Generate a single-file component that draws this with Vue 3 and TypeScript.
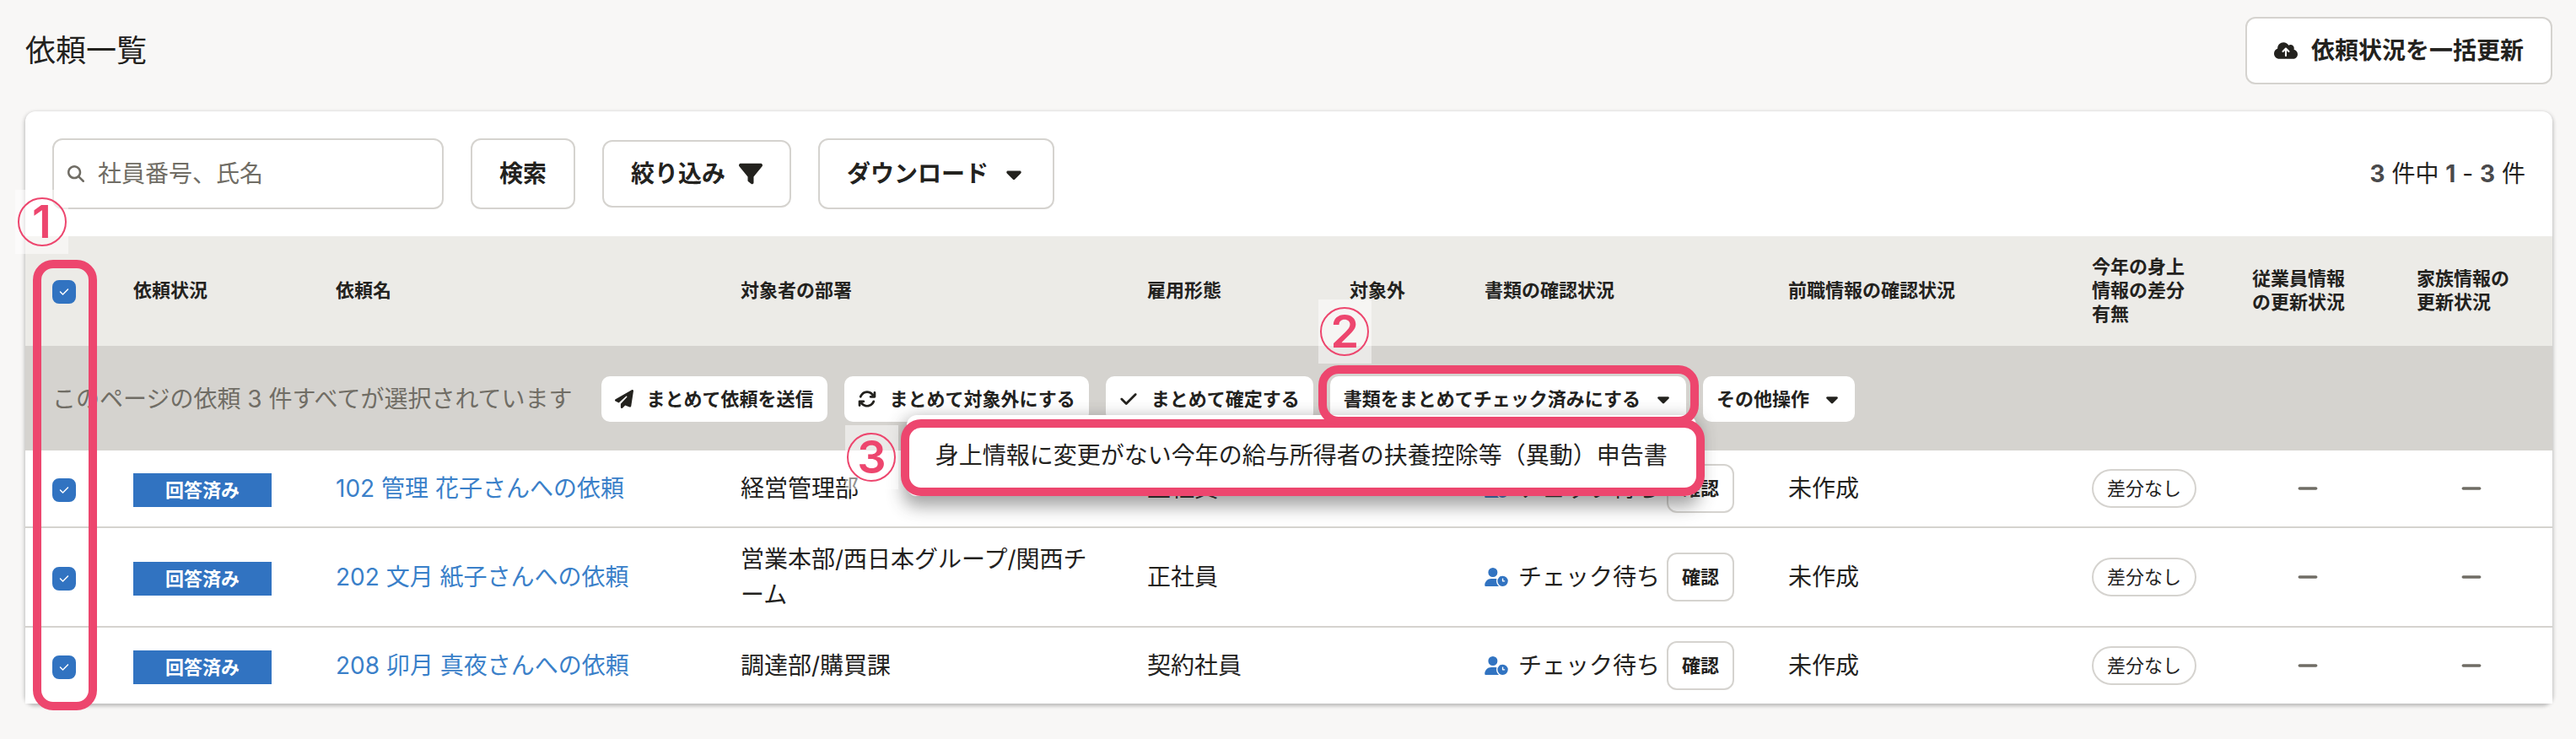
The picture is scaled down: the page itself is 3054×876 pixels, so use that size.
<script setup lang="ts">
import { h, reactive, computed, type FunctionalComponent } from 'vue'

type IconName = 'cloud' | 'search' | 'filter' | 'caret' | 'plane' | 'rotate' | 'check' | 'userClock' | 'minus'

const icons: Record<IconName, [number, string]> = {
  cloud: [640, 'M144 480C64.5 480 0 415.5 0 336c0-62.8 40.2-116.2 96.2-135.9c-.1-2.7-.2-5.4-.2-8.1c0-88.4 71.6-160 160-160c59.3 0 111 32.2 138.7 80.2C409.9 102 428.3 96 448 96c53 0 96 43 96 96c0 12.2-2.3 23.8-6.4 34.6C596 238.4 640 290.1 640 352c0 70.7-57.3 128-128 128H144zm79-217c-9.4 9.4-9.4 24.6 0 33.9s24.6 9.4 33.9 0l39-39V392c0 13.3 10.7 24 24 24s24-10.7 24-24V257.9l39 39c9.4 9.4 24.6 9.4 33.9 0s9.4-24.6 0-33.9l-80-80c-9.4-9.4-24.6-9.4-33.9 0l-80 80z'],
  search: [512, 'M416 208c0 45.9-14.9 88.3-40 122.7L502.6 457.4c12.5 12.5 12.5 32.8 0 45.3s-32.8 12.5-45.3 0L330.7 376c-34.4 25.2-76.8 40-122.7 40C93.1 416 0 322.9 0 208S93.1 0 208 0S416 93.1 416 208zM208 352a144 144 0 1 0 0-288 144 144 0 1 0 0 288z'],
  filter: [512, 'M3.9 54.9C10.5 40.9 24.5 32 40 32H472c15.5 0 29.5 8.9 36.1 22.9s4.6 30.5-5.2 42.5L320 320.9V448c0 12.1-6.8 23.2-17.7 28.6s-23.8 4.3-33.5-3l-64-48c-8.1-6-12.8-15.5-12.8-25.6V320.9L9 97.3C-.7 85.4-2.8 68.8 3.9 54.9z'],
  caret: [320, 'M137.4 374.6c12.5 12.5 32.8 12.5 45.3 0l128-128c9.2-9.2 11.9-22.9 6.9-34.9s-16.6-19.8-29.6-19.8L32 192c-12.9 0-24.6 7.8-29.6 19.8s-2.2 25.7 6.9 34.9l128 128z'],
  plane: [512, 'M498.1 5.6c10.1 7 15.4 19.1 13.5 31.2l-64 416c-1.5 9.7-7.4 18.2-16 23s-18.9 5.4-28 1.6L284 427.7l-68.5 74.1c-8.9 9.7-22.9 12.9-35.2 8.1S160 493.2 160 480V396.4c0-4 1.5-7.8 4.2-10.7L331.8 202.8c5.8-6.3 5.6-16-.4-22s-15.7-6.4-22-.7L106 360.8 17.7 316.6C7.1 311.3 .3 300.7 0 288.9s5.9-22.8 16.1-28.7l448-256c10.7-6.1 23.9-5.5 34 1.4z'],
  rotate: [512, 'M105.1 202.6c7.7-21.8 20.2-42.3 37.8-59.8c62.5-62.5 163.8-62.5 226.3 0L386.3 160H352c-17.7 0-32 14.3-32 32s14.3 32 32 32H463.5h.4c17.7 0 32-14.3 32-32V80c0-17.7-14.3-32-32-32s-32 14.3-32 32v35.2L414.4 97.6c-87.5-87.5-229.3-87.5-316.8 0C73.2 122 55.6 150.7 44.8 181.4c-5.9 16.7 2.9 34.9 19.5 40.8s34.9-2.9 40.8-19.5zM39 289.3c-5 1.5-9.8 4.2-13.7 8.2c-4 4-6.7 8.8-8.1 14c-.3 1.2-.6 2.5-.8 3.8c-.3 1.7-.4 3.4-.4 5.1V432c0 17.7 14.3 32 32 32s32-14.3 32-32V396.9l17.6 17.5c87.5 87.4 229.3 87.4 316.7 0c24.4-24.4 42.1-53.1 52.9-83.7c5.9-16.7-2.9-34.9-19.5-40.8s-34.9 2.9-40.8 19.5c-7.7 21.8-20.2 42.3-37.8 59.8c-62.5 62.5-163.8 62.5-226.3 0l-.1-.1L125.6 352H160c17.7 0 32-14.3 32-32s-14.3-32-32-32H48.4c-1.6 0-3.2 .1-4.8 .3s-3.1 .5-4.6 1z'],
  check: [448, 'M438.6 105.4c12.5 12.5 12.5 32.8 0 45.3l-256 256c-12.5 12.5-32.8 12.5-45.3 0l-128-128c-12.5-12.5-12.5-32.8 0-45.3s32.8-12.5 45.3 0L160 338.7 393.4 105.4c12.5-12.5 32.8-12.5 45.3 0z'],
  userClock: [640, 'M224 256A128 128 0 1 0 224 0a128 128 0 1 0 0 256zM178.3 304C79.8 304 0 383.8 0 482.3C0 498.7 13.3 512 29.7 512H392C350 480 322 430 321 368c0-20 3-40 9-58c-18-4-38-6-60-6H178.3zM640 368a144 144 0 1 0-288 0 144 144 0 1 0 288 0zM496 288c8.8 0 16 7.2 16 16v48h32c8.8 0 16 7.2 16 16s-7.2 16-16 16H496c-8.8 0-16-7.2-16-16V304c0-8.8 7.2-16 16-16z'],
  minus: [448, 'M432 256c0 17.7-14.3 32-32 32L48 288c-17.7 0-32-14.3-32-32s14.3-32 32-32l352 0c17.7 0 32 14.3 32 32z'],
}

const Icon: FunctionalComponent<{ name: IconName }> = (props) => {
  const [width, d] = icons[props.name]
  return h('svg', { viewBox: `0 0 ${width} 512`, 'aria-hidden': 'true' }, [
    h('path', { d, fill: 'currentColor', 'fill-rule': 'evenodd' }),
  ])
}
Icon.props = ['name']

interface RequestRow {
  id: number
  name: string
  department: string
  employment: string
  checked: boolean
}

const rows = reactive<RequestRow[]>([
  { id: 102, name: '102 管理 花子さんへの依頼', department: '経営管理部', employment: '正社員', checked: true },
  { id: 202, name: '202 文月 紙子さんへの依頼', department: '営業本部/西日本グループ/関西チーム', employment: '正社員', checked: true },
  { id: 208, name: '208 卯月 真夜さんへの依頼', department: '調達部/購買課', employment: '契約社員', checked: true },
])

const headings = [
  '依頼状況', '依頼名', '対象者の部署', '雇用形態', '対象外', '書類の確認状況',
  '前職情報の確認状況', '今年の身上情報の差分有無', '従業員情報の更新状況', '家族情報の更新状況',
]

const allChecked = computed({
  get: () => rows.every((row) => row.checked),
  set: (value: boolean) => rows.forEach((row) => { row.checked = value }),
})
</script>

<template>
  <main class="page">
    <header class="page-head">
      <h1>依頼一覧</h1>
      <button type="button" class="btn btn-short"><Icon name="cloud" class="icon" />依頼状況を一括更新</button>
    </header>

    <section class="panel">
      <div class="toolbar">
        <label class="search">
          <Icon name="search" class="search-icon" />
          <input type="text" placeholder="社員番号、氏名" aria-label="社員番号、氏名" />
        </label>
        <button type="button" class="btn">検索</button>
        <button type="button" class="btn btn-short">絞り込み<Icon name="filter" class="icon" /></button>
        <button type="button" class="btn">ダウンロード<Icon name="caret" class="icon" /></button>
        <p class="count"><b>3</b> 件中 <b>1</b> - <b>3</b> 件</p>
      </div>

      <table>
        <colgroup>
          <col class="c-check" /><col class="c-mid" /><col class="c-name" /><col /><col class="c-mid" />
          <col class="c-out" /><col class="c-wide" /><col class="c-wide" /><col class="c-diff" /><col class="c-emp" /><col class="c-fam" />
        </colgroup>
        <thead>
          <tr>
            <th scope="col">
              <span class="tick">
                <input v-model="allChecked" type="checkbox" aria-label="すべて選択" />
                <Icon name="check" />
              </span>
            </th>
            <th v-for="heading in headings" :key="heading" scope="col">{{ heading }}</th>
          </tr>
        </thead>
        <tbody>
          <tr class="bulk-row">
            <td colspan="11">
              <div class="bulk">
                <p>このページの依頼 3 件すべてが選択されています</p>
                <button type="button" class="btn-s"><Icon name="plane" class="icon" />まとめて依頼を送信</button>
                <button type="button" class="btn-s"><Icon name="rotate" class="icon" />まとめて対象外にする</button>
                <button type="button" class="btn-s"><Icon name="check" class="icon" />まとめて確定する</button>
                <div class="dropdown">
                  <button type="button" class="btn-s" aria-expanded="true">書類をまとめてチェック済みにする<Icon name="caret" class="icon" /></button>
                  <div class="menu">
                    <button type="button" class="menu-item">身上情報に変更がない今年の給与所得者の扶養控除等（異動）申告書</button>
                    <span class="ring ring-menu"></span>
                    <span class="step step-menu"><i>3</i></span>
                  </div>
                  <span class="ring ring-button"></span>
                  <span class="step step-button"><i>2</i></span>
                </div>
                <button type="button" class="btn-s">その他操作<Icon name="caret" class="icon" /></button>
              </div>
            </td>
          </tr>
          <tr v-for="row in rows" :key="row.id" class="item">
            <td>
              <span class="tick">
                <input v-model="row.checked" type="checkbox" :aria-label="row.name" />
                <Icon name="check" />
              </span>
            </td>
            <td><span class="status">回答済み</span></td>
            <td><a href="#">{{ row.name }}</a></td>
            <td>{{ row.department }}</td>
            <td>{{ row.employment }}</td>
            <td></td>
            <td>
              <div class="review">
                <Icon name="userClock" class="waiting" />
                <span>チェック待ち</span>
                <button type="button" class="btn-confirm">確認</button>
              </div>
            </td>
            <td>未作成</td>
            <td><span class="chip">差分なし</span></td>
            <td><Icon name="minus" class="dash" /></td>
            <td><Icon name="minus" class="dash" /></td>
          </tr>
        </tbody>
      </table>

      <span class="ring ring-checks"></span>
      <span class="step step-checks"><i>1</i></span>
    </section>
  </main>
</template>

<style>
body {
  background: #f8f7f6;
}
</style>

<style scoped>
* {
  box-sizing: border-box;
}

.page {
  padding: 20px 28px 40px 30px;
  color: #23221e;
  font: 28px/42px Inter, "Noto Sans CJK JP", sans-serif;
}

h1,
p {
  margin: 0;
}

button,
input {
  font: inherit;
  color: inherit;
}

button {
  margin: 0;
  cursor: pointer;
}

svg {
  display: block;
  flex: none;
}

.page-head {
  display: flex;
  align-items: center;
  justify-content: space-between;
  margin-bottom: 32px;
}

h1 {
  font-size: 36px;
  font-weight: 400;
}

.btn {
  display: flex;
  align-items: center;
  gap: 16px;
  height: 84px;
  padding: 0 32px;
  border: 2px solid #d5d3cf;
  border-radius: 12px;
  background: #fff;
  font-weight: 700;
  white-space: nowrap;
}

.btn-short {
  height: 80px;
}

.btn .icon {
  width: 28px;
  height: 28px;
}

.panel {
  position: relative;
  border-radius: 12px;
  background: #fff;
  box-shadow: 0 2px 4px 1px rgba(51, 51, 51, 0.3);
}

.toolbar {
  display: flex;
  align-items: center;
  gap: 32px;
  padding: 32px;
}

.search {
  display: flex;
  align-items: center;
  gap: 16px;
  width: 464px;
  height: 84px;
  padding: 0 16px;
  border: 2px solid #d5d3cf;
  border-radius: 12px;
}

.search-icon {
  width: 20px;
  height: 20px;
  color: #706d65;
}

.search input {
  flex: 1;
  min-width: 0;
  padding: 0;
  border: 0;
  outline: 0;
  background: none;
}

.search input::placeholder {
  color: #706d65;
  opacity: 1;
}

.count {
  margin-left: auto;
}

.count b {
  color: #4a4a4c;
}

table {
  width: 100%;
  border-collapse: separate;
  border-spacing: 0;
  table-layout: fixed;
}

.c-check { width: 96px; }
.c-mid { width: 240px; }
.c-name { width: 480px; }
.c-out { width: 160px; }
.c-wide { width: 360px; }
.c-diff { width: 190px; }
.c-emp { width: 195px; }
.c-fam { width: 193px; }

th {
  padding: 22px 32px 24px;
  background: #ecebe7;
  font-size: 22px;
  line-height: 28px;
  text-align: left;
  line-break: loose;
}

.bulk-row td {
  padding: 36px 32px 34px;
  background: #d5d3cf;
}

.bulk {
  display: flex;
  align-items: center;
  gap: 20px;
}

.bulk p {
  margin-right: 14px;
  color: #706d65;
  white-space: nowrap;
}

.btn-s {
  display: flex;
  align-items: center;
  gap: 16px;
  height: 54px;
  padding: 0 16px;
  border: 0;
  border-radius: 10px;
  background: #fff;
  font-size: 22px;
  font-weight: 700;
  white-space: nowrap;
}

.btn-s .icon {
  width: 22px;
  height: 22px;
}

.item td {
  padding: 16px 32px;
  background: #fff;
  line-break: anywhere;
}

.item + .item td {
  border-top: 2px solid #d5d3cf;
}

.tick {
  display: block;
  position: relative;
  width: 28px;
  height: 28px;
  margin-top: 4px;
}

.tick input {
  display: block;
  width: 28px;
  height: 28px;
  margin: 0;
  border: 2px solid #d5d3cf;
  border-radius: 8px;
  background: #fff;
  appearance: none;
}

.tick input:checked {
  border-color: #3173c1;
  background: #3173c1;
}

.tick svg {
  position: absolute;
  inset: 8px;
  width: 12px;
  height: 12px;
  color: #fff;
  pointer-events: none;
}

.status {
  display: block;
  width: 164px;
  height: 40px;
  margin-top: 4px;
  background: #3173c1;
  color: #fff;
  font-size: 22px;
  font-weight: 700;
  line-height: 40px;
  text-align: center;
}

a {
  color: #3a80c9;
  text-decoration: none;
}

.review {
  display: flex;
  align-items: center;
  white-space: nowrap;
}

.waiting {
  width: 28px;
  height: 22px;
  margin-right: 12px;
  color: #3173c1;
}

.btn-confirm {
  height: 58px;
  margin-left: 8px;
  padding: 0 16px;
  border: 2px solid #d5d3cf;
  border-radius: 12px;
  background: #fff;
  font-size: 22px;
  font-weight: 700;
}

.chip {
  display: block;
  width: max-content;
  padding: 6px 16px;
  border: 2px solid #d5d3cf;
  border-radius: 24px;
  font-size: 22px;
  line-height: 30px;
}

.item td:nth-last-child(-n + 2) {
  padding: 16px 0;
}

.dash {
  width: 28px;
  height: 28px;
  margin: 0 auto;
  color: #706d65;
}

.dropdown {
  position: relative;
}

.menu {
  position: absolute;
  z-index: 1;
  top: 46px;
  left: -502px;
  padding: 27px 34px;
  border-radius: 12px;
  background: #fff;
  box-shadow: 0 8px 20px 4px rgba(51, 51, 51, 0.45);
}

.menu-item {
  display: block;
  padding: 0;
  border: 0;
  background: none;
  white-space: nowrap;
}

/* Numbered callouts that walk the reader through the operation */
.ring {
  position: absolute;
  border: 10px solid #ed466e;
  border-radius: 24px;
  pointer-events: none;
}

.ring-checks {
  top: 176px;
  bottom: -8px;
  left: 9px;
  width: 76px;
}

.ring-button {
  z-index: 2;
  inset: -13px -15px -4px -14px;
}

.ring-menu {
  inset: 5px -10px 0 -7px;
}

.step {
  display: flex;
  align-items: center;
  justify-content: center;
  position: absolute;
  width: 63px;
  height: 76px;
  background: rgba(255, 255, 255, 0.5);
  color: #ed466e;
}

.step i {
  width: 58px;
  height: 58px;
  border: 2px solid #ed466e;
  border-radius: 50%;
  font-size: 54px;
  font-style: normal;
  font-weight: 600;
  line-height: 54px;
  text-align: center;
}

.step-checks {
  top: 93px;
  left: -12px;
}

.step-button {
  top: -91px;
  left: -14px;
}

.step-menu {
  top: 12px;
  left: -73px;
}
</style>
